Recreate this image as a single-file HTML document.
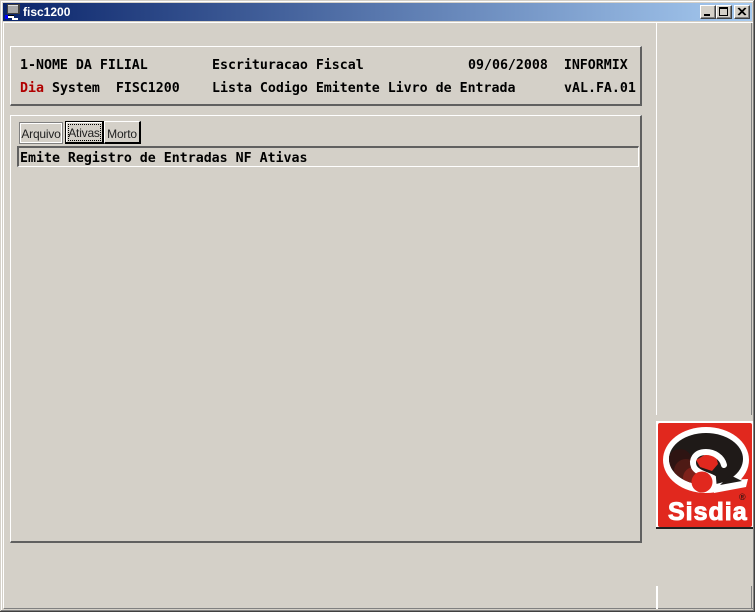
<!DOCTYPE html>
<html>
<head>
<meta charset="utf-8">
<style>
html,body{margin:0;padding:0;background:#d4d0c8;}
body{width:755px;height:612px;position:relative;overflow:hidden;}
div{position:absolute;box-sizing:border-box;}
.t{font-family:"DejaVu Sans Mono",monospace;font-weight:bold;font-size:13.28px;line-height:16px;height:16px;color:#000;white-space:pre;letter-spacing:0;}
.b{font-family:"Liberation Sans",sans-serif;font-size:12px;letter-spacing:-.2px;color:#222;text-align:center;line-height:19px;background:#d4d0c8;white-space:pre;}
</style>
</head>
<body>
<!-- window frame -->
<div style="left:0;top:0;width:755px;height:612px;background:#d4d0c8"></div>
<div style="left:1px;top:1px;width:753px;height:1px;background:#fff"></div>
<div style="left:1px;top:1px;width:1px;height:609px;background:#fff"></div>
<div style="left:754px;top:0;width:1px;height:612px;background:#404040"></div>
<div style="left:753px;top:1px;width:1px;height:610px;background:#808080"></div>
<div style="left:0;top:611px;width:755px;height:1px;background:#404040"></div>
<div style="left:1px;top:610px;width:753px;height:1px;background:#808080"></div>

<!-- titlebar -->
<div style="left:3px;top:3px;width:749px;height:18px;background:linear-gradient(90deg,#0a246a,#a6caf0)"></div>
<svg style="position:absolute;left:5px;top:4px" width="16" height="16" viewBox="0 0 16 16">
<rect x="2" y="0" width="13" height="10" fill="#404040"/>
<rect x="3" y="1" width="10" height="8" fill="#a8a8a8"/>
<rect x="3" y="1" width="10" height="1" fill="#e0e0e0"/>
<rect x="0" y="11" width="3" height="4" fill="#0000ff"/>
<rect x="3" y="12" width="6" height="2" fill="#fff"/>
<rect x="7" y="14" width="6" height="2" fill="#fff"/>
<rect x="3" y="11" width="6" height="1" fill="#000"/>
</svg>
<div style="left:23px;top:3px;height:18px;line-height:18px;font-family:'Liberation Sans',sans-serif;font-weight:bold;font-size:12px;color:#fff;white-space:pre">fisc1200</div>

<!-- caption buttons -->
<div style="left:700px;top:5px;width:16px;height:14px;background:#d4d0c8;border:1px solid;border-color:#fff #404040 #404040 #fff;box-shadow:inset -1px -1px 0 #808080"></div>
<div style="left:704px;top:14px;width:6px;height:2px;background:#000"></div>
<div style="left:716px;top:5px;width:16px;height:14px;background:#d4d0c8;border:1px solid;border-color:#fff #404040 #404040 #fff;box-shadow:inset -1px -1px 0 #808080"></div>
<div style="left:719px;top:7px;width:9px;height:9px;border:1px solid #000;border-top-width:2px"></div>
<div style="left:734px;top:5px;width:16px;height:14px;background:#d4d0c8;border:1px solid;border-color:#fff #404040 #404040 #fff;box-shadow:inset -1px -1px 0 #808080"></div>
<svg style="position:absolute;left:737px;top:7px" width="10" height="10" viewBox="0 0 10 10"><path d="M1 1L8 8M2 1L9 8M8 1L1 8M9 1L2 8" stroke="#000" stroke-width="1.1" fill="none"/></svg>

<!-- client sunken edge -->
<div style="left:3px;top:22px;width:750px;height:1px;background:#fff"></div>
<div style="left:3px;top:22px;width:1px;height:586px;background:#fff"></div>
<div style="left:4px;top:608px;width:749px;height:1px;background:#808080"></div>
<div style="left:751px;top:23px;width:1px;height:392px;background:#808080"></div>
<div style="left:751px;top:586px;width:1px;height:22px;background:#808080"></div>
<div style="left:656px;top:23px;width:1px;height:392px;background:#fff"></div>
<div style="left:656px;top:586px;width:2px;height:23px;background:#fff"></div>

<!-- header panel -->
<div style="left:10px;top:46px;width:632px;height:60px;border:2px solid;border-color:#fff #606060 #606060 #fff;border-left-width:1px;border-top-width:1px"></div>
<div class="t" style="left:20px;top:58px">1-NOME DA FILIAL</div>
<div class="t" style="left:212px;top:58px">Escrituracao Fiscal</div>
<div class="t" style="left:468px;top:58px">09/06/2008  INFORMIX</div>
<div class="t" style="left:20px;top:81px"><span style="color:#b00000">Dia</span> System  FISC1200</div>
<div class="t" style="left:212px;top:81px">Lista Codigo Emitente Livro de Entrada</div>
<div class="t" style="left:564px;top:81px">vAL.FA.01</div>

<!-- main panel -->
<div style="left:10px;top:115px;width:632px;height:428px;border:2px solid;border-color:#fff #606060 #606060 #fff;border-left-width:1px;border-top-width:1px"></div>

<!-- buttons -->
<div class="b" style="left:19px;top:122px;width:44px;height:22px;border:1px solid #808080;box-shadow:inset 0 0 0 1px #fff;line-height:22px">Arquivo</div>
<div class="b" style="left:65px;top:121px;width:39px;height:23px;border:1px solid #000;border-right-width:2px;border-bottom-width:2px;box-shadow:inset 1px 1px 0 #fff;line-height:23px">Ativas</div>
<div style="left:68px;top:124px;width:33px;height:17px;border:1px dotted #000"></div>
<div class="b" style="left:104px;top:121px;width:37px;height:23px;border:1px solid #000;border-color:#fff #000 #000 #fff;border-right-width:2px;border-bottom-width:2px;line-height:24px">Morto</div>

<!-- status field -->
<div style="left:17px;top:146px;width:622px;height:21px;border:1px solid;border-color:#606060 #fff #fff #606060;border-left-width:2px;border-top-width:2px"></div>
<div class="t" style="left:20px;top:151px">Emite Registro de Entradas NF Ativas</div>

<!-- logo -->
<div style="left:656px;top:421px;width:97px;height:108px;background:#fff;border-bottom:2px solid #202020"></div>
<svg style="position:absolute;left:658px;top:423px" width="94" height="104" viewBox="0 0 94 104">
<rect x="0" y="0" width="94" height="104" rx="2" fill="#e1281e"/>
<ellipse cx="48" cy="37" rx="43" ry="33" fill="#fff"/>
<path d="M56 58L90 56L88 64L56 70Z" fill="#fff"/>
<ellipse cx="48" cy="36" rx="37" ry="26" fill="#1f1a18"/>
<path d="M72 52L84 58L62 62Z" fill="#1f1a18"/>
<clipPath id="c"><ellipse cx="48" cy="36" rx="37" ry="26"/></clipPath>
<g clip-path="url(#c)">
<circle cx="22" cy="38" r="12" fill="#2e1412"/>
<circle cx="28" cy="48" r="12" fill="#4e1a15"/>
<circle cx="36" cy="55" r="11" fill="#7e211a"/>
</g>
<path d="M50 30L58 33L60 41L54 48L42 44L38 37Z" fill="#e1281e"/>
<path d="M66 42C64 34 56 29 48 29C37 29 33 37 36 44C39 50 50 52 55 55L56 66" fill="none" stroke="#fff" stroke-width="6" stroke-linecap="round"/>
<circle cx="44" cy="59" r="10.5" fill="#e1281e"/>
<text x="10" y="97" font-family="'Liberation Sans',sans-serif" font-weight="bold" font-size="25" letter-spacing="1" fill="#fff" stroke="#fff" stroke-width="1">Sisdia</text>
<text x="81" y="77" font-family="'Liberation Sans',sans-serif" font-size="9" font-weight="bold" fill="#3a1512">®</text>
</svg>
</body>
</html>
